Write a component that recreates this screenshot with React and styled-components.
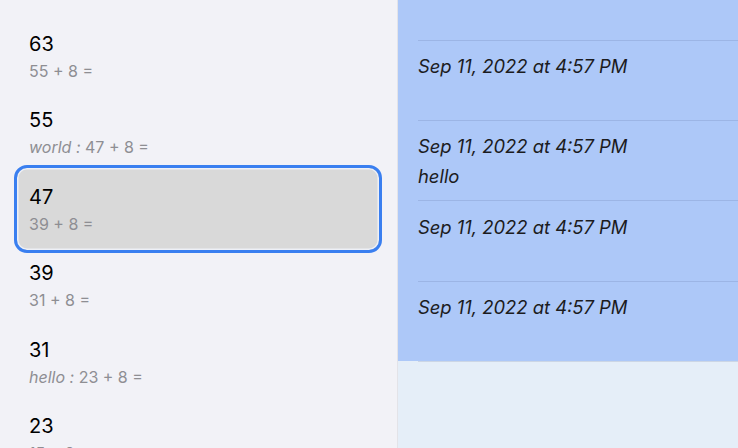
import React from "react";
import styled, { createGlobalStyle } from "styled-components";

const GlobalStyle = createGlobalStyle`
  html, body {
    margin: 0;
    padding: 0;
    width: 738px;
    height: 448px;
    overflow: hidden;
    font-family: Inter, "Liberation Sans", sans-serif;
  }
`;

const history = [
  { value: 63, note: "", expr: "55 + 8 =" },
  { value: 55, note: "world", expr: "47 + 8 =" },
  { value: 47, note: "", expr: "39 + 8 =", selected: true },
  { value: 39, note: "", expr: "31 + 8 =" },
  { value: 31, note: "hello", expr: "23 + 8 =" },
  { value: 23, note: "", expr: "15 + 8 =" },
];

const entries = [
  { date: "Sep 11, 2022 at 4:57 PM", note: "" },
  { date: "Sep 11, 2022 at 4:57 PM", note: "hello" },
  { date: "Sep 11, 2022 at 4:57 PM", note: "" },
  { date: "Sep 11, 2022 at 4:57 PM", note: "" },
];

const App = () => {
  return (
    <Screen>
      <GlobalStyle />
      <Sidebar>
        <List>
          {history.map((item) => (
            <Row key={item.value} selected={item.selected}>
              <Value>{item.value}</Value>
              <Expr>
                {item.note && <Note>{item.note} : </Note>}
                {item.expr}
              </Expr>
            </Row>
          ))}
        </List>
      </Sidebar>
      <Detail>
        <Cell short />
        {entries.map((entry, i) => (
          <Cell key={i}>
            <DateLine>{entry.date}</DateLine>
            {entry.note && <DateLine>{entry.note}</DateLine>}
          </Cell>
        ))}
        <Empty />
      </Detail>
    </Screen>
  );
};

const Screen = styled.div`
  display: flex;
  width: 738px;
  height: 448px;
  overflow: hidden;
`;

const Sidebar = styled.div`
  width: 397px;
  flex-shrink: 0;
  background: #f2f2f7;
  border-right: 1px solid #e3e3e8;
  overflow: hidden;
`;

const List = styled.div`
  display: flex;
  flex-direction: column;
  padding-top: 18px;
`;

const Row = styled.div`
  position: relative;
  height: 76.5px;
  display: flex;
  flex-direction: column;
  justify-content: center;
  padding-left: 29px;
  box-sizing: border-box;

  &::before {
    content: "";
    display: ${(p) => (p.selected ? "block" : "none")};
    position: absolute;
    top: -6px;
    bottom: -5px;
    left: 14px;
    right: 15px;
    border: 3px solid #3a7ff0;
    border-radius: 13px;
    background: #d9d9d9;
    box-shadow: inset 0 0 0 1.5px #eef0f6;
    z-index: 0;
  }
`;

const Value = styled.div`
  position: relative;
  z-index: 1;
  font-size: 20px;
  line-height: 24px;
  color: #000;
`;

const Expr = styled.div`
  position: relative;
  z-index: 1;
  margin-top: 5px;
  font-size: 16px;
  line-height: 20px;
  color: #8e8e93;
`;

const Note = styled.span`
  font-style: italic;
`;

const Detail = styled.div`
  flex: 1;
  display: flex;
  flex-direction: column;
  background: #e5eef8;
`;

const Cell = styled.div`
  position: relative;
  height: ${(p) => (p.short ? "39.5px" : "80.4px")};
  flex-shrink: 0;
  box-sizing: border-box;
  padding: 11.5px 0 0 20px;
  background: #adc8f8;

  &::after {
    content: "";
    position: absolute;
    left: 20px;
    right: 0;
    bottom: -1px;
    height: 1px;
    background: rgba(60, 70, 110, 0.14);
    z-index: 1;
  }
`;

const DateLine = styled.div`
  font-size: 18.4px;
  line-height: 30px;
  font-style: italic;
  color: #1c1c1e;
`;

const Empty = styled.div`
  flex: 1;
`;

export default App;
